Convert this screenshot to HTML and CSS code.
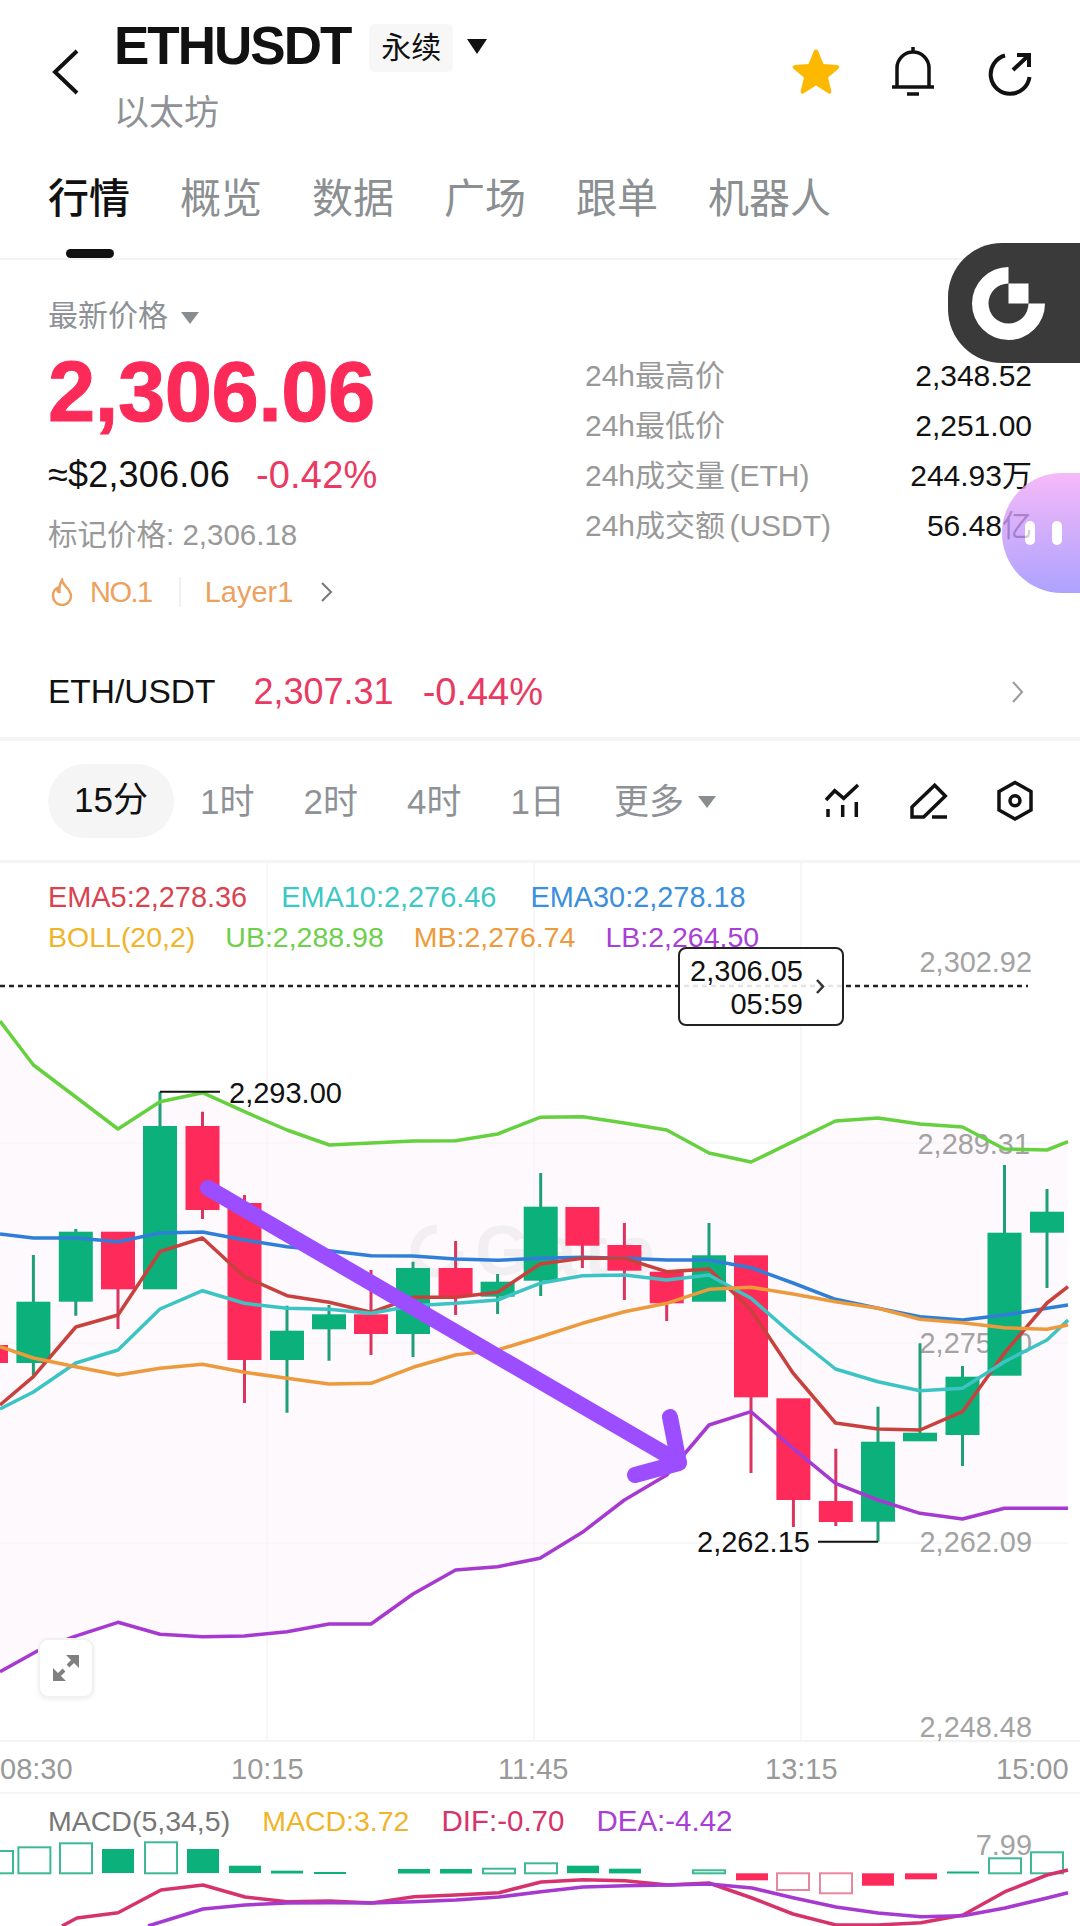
FILE: index.html
```html
<!DOCTYPE html>
<html lang="zh-CN">
<head>
  <meta charset="UTF-8">
  <meta name="viewport" content="width=device-width, initial-scale=1.0">
  <title>ETHUSDT 永续</title>
  <link rel="stylesheet" href="styles.css">
</head>
<body>
  <div id="page">
    <!-- Top bar -->
    <header class="topbar">
      <svg class="back-icon" viewBox="0 0 27 46"><path d="M25 2 3 23l22 21"/></svg>
      <div class="symbol">
        <div class="symbol-row">
          <h1 class="symbol-name">ETHUSDT</h1>
          <span class="symbol-chip">永续</span>
          <span class="caret caret-black"></span>
        </div>
        <div class="symbol-sub">以太坊</div>
      </div>
      <div class="top-actions">
        <svg class="star-icon" viewBox="0 0 50 48"><path d="M25 1.500c1.300 0 2 .8 2.500 2.200l5 12.300 13.300 1c2.700.2 3.300 2.300 1.400 4l-10.200 8.600 3.200 13c.7 2.700-1 4-3.300 2.500L25 37.500l-11.900 7.600c-2.300 1.500-4 .2-3.300-2.500l3.200-13L2.800 21c-1.900-1.700-1.300-3.800 1.400-4l13.300-1 5-12.300c.5-1.400 1.200-2.200 2.500-2.200z"/></svg>
        <svg class="bell-icon" viewBox="0 0 42 50"><path d="M21 0v5M5 40V21a16 16 0 0 1 32 0v19M0 40h42M15 47h12"/></svg>
        <svg class="share-icon" viewBox="0 0 46 46"><path d="M18 3.500A19.500 19.500 0 1 0 42.500 25M26 18 42 3M30 3h12v12"/></svg>
      </div>
    </header>

    <!-- Section tabs -->
    <nav class="tabs">
      <div class="tab-row">
        <span class="tab tab-active">行情</span>
        <span class="tab">概览</span>
        <span class="tab">数据</span>
        <span class="tab">广场</span>
        <span class="tab">跟单</span>
        <span class="tab">机器人</span>
      </div>
      <div class="tab-mark"></div>
    </nav>

    <!-- Price summary -->
    <section class="summary">
      <div class="summary-left">
        <div class="price-title">最新价格<span class="caret caret-grey"></span></div>
        <div class="price-main">2,306.06</div>
        <div class="price-sub"><span>≈$2,306.06</span><span class="price-change">-0.42%</span></div>
        <div class="price-mark">标记价格: 2,306.18</div>
        <div class="tags">
          <svg class="flame-icon" viewBox="0 0 22 28"><path d="M11 2c1 6 9 9 9 16a9 9 0 0 1-18 0c0-4 2-7 4-8 0 2 1 4 2.500 4C8 9 9 5 11 2z"/></svg>
          <span class="tag-rank">NO.1</span>
          <span class="tag-split"></span>
          <span>Layer1</span>
          <svg class="tag-arrow" viewBox="0 0 13 20"><path d="m2 1 9 9-9 9"/></svg>
        </div>
      </div>
      <div class="stats">
        <div class="stat"><span class="stat-label">24h最高价</span><span>2,348.52</span></div>
        <div class="stat"><span class="stat-label">24h最低价</span><span>2,251.00</span></div>
        <div class="stat"><span class="stat-label">24h成交量 (ETH)</span><span>244.93万</span></div>
        <div class="stat"><span class="stat-label">24h成交额 (USDT)</span><span>56.48亿</span></div>
      </div>
    </section>

    <section class="spot-row">
      <span class="spot-name">ETH/USDT</span>
      <span class="spot-price">2,307.31</span>
      <span class="spot-change">-0.44%</span>
      <svg class="spot-arrow" viewBox="0 0 13 22"><path d="m2 1 9 10-9 10"/></svg>
    </section>

    <!-- Interval switcher -->
    <section class="intervals">
      <span class="interval interval-active">15分</span>
      <span class="interval">1时</span>
      <span class="interval">2时</span>
      <span class="interval">4时</span>
      <span class="interval">1日</span>
      <span class="interval">更多<span class="caret caret-grey caret-more"></span></span>
      <div class="chart-tools">
        <svg class="tool-icon" viewBox="0 0 40 38"><path d="M4 18 12.700 8.700l9 7.600L36 3M6 27v8M20.700 23v12M34.300 20v15"/></svg>
        <svg class="tool-icon" viewBox="0 0 42 38"><path d="M4 35V25L26.700 3.300 37.300 14 15.700 35zM24 35h15"/></svg>
        <svg class="tool-icon" viewBox="0 0 38 44"><path d="m19 3.500 16 9V31l-16 9-16-9V12.500z"/><circle cx="19" cy="21.700" r="5"/></svg>
      </div>
    </section>

    <!-- Candles, indicators and price axis -->
    <section class="chart">
      <svg class="chart-canvas" viewBox="0 863 1080 879">
        <polygon class="boll-band" points="0,1021 33.400,1065 75.800,1097 118,1129 160,1101.700 202.500,1092.700 244.500,1111.700 287,1130 329.500,1145 371,1143 413,1141 455.600,1140.700 497.600,1134 540,1117.300 583,1116.700 624.400,1123 666.700,1130 709,1153 751,1162 793,1141.700 835.500,1121 878,1118 920,1124 962.500,1127 1004.500,1149 1047,1150 1068,1141.700 1068,1508.300 1047,1508.300 1004.500,1508.300 962.500,1519 920,1513.300 878,1500 835.500,1483.300 793,1448.300 751,1411.700 709,1425 666.700,1475 624.400,1500 582.400,1532.300 540,1558.300 497.600,1566.700 455.600,1570 413,1594 371,1624 329,1624 287,1631.700 244.500,1636 202.500,1636.700 160,1634.300 118,1622.300 74,1636.700 36,1651.700 0,1671.700"/>
        <path class="grid" d="M267 863v879M534 863v879M801 863v879M0 1143h1068M0 1343h1068M0 1543h1068"/>

        <!-- watermark -->
        <g class="watermark">
          <path class="watermark-ring" d="M437 1229a22 22 0 1 0 22 22"/>
          <text x="475" y="1275">Gate</text>
        </g>

        <g class="axis-labels">
          <text x="1032" y="972">2,302.92</text>
          <text x="1030" y="1154">2,289.31</text>
          <text x="1032" y="1353">2,275.70</text>
          <text x="1032" y="1552">2,262.09</text>
          <text x="1032" y="1737">2,248.48</text>
        </g>

        <!-- falling candles -->
        <path class="wick-down" d="M202.500 1111.700v107.300M244.500 1195v208M118 1289v40M371 1270v85M455.600 1241v74M582.400 1245v23M624.400 1223v77M666.700 1303v18M751 1397v76M793.400 1498v29M835.800 1448.700v77.300"/>
        <g class="candle-down">
          <rect x="-26" y="1345" width="34" height="18"/>
          <rect x="101" y="1231.700" width="34" height="57.600"/>
          <rect x="185.500" y="1126" width="34" height="84"/>
          <rect x="227.500" y="1203" width="34" height="157"/>
          <rect x="354" y="1314.300" width="34" height="19.700"/>
          <rect x="438.600" y="1268" width="34" height="28.700"/>
          <rect x="565.400" y="1207" width="34" height="38.700"/>
          <rect x="607.400" y="1245" width="34" height="25.700"/>
          <rect x="649.700" y="1271.700" width="34" height="31.600"/>
          <rect x="734" y="1255.300" width="34" height="142"/>
          <rect x="776.400" y="1398.300" width="34" height="101.700"/>
          <rect x="818.800" y="1501" width="34" height="21"/>
        </g>

        <!-- rising candles -->
        <path class="wick-up" d="M33.400 1255v120M75.800 1229v86.700M160 1091.700v40M287 1305.700v107M329 1305v55.700M413 1261.700v95.300M497.600 1274v40M540.700 1173v123M709 1223v40M878 1406.700v135M920 1343.300v92M962.500 1366v100M1004.500 1165v70M1047 1189v99"/>
        <g class="candle-up">
          <rect x="16.400" y="1301.700" width="34" height="61.300"/>
          <rect x="58.800" y="1231.700" width="34" height="70"/>
          <rect x="143" y="1126" width="34" height="163.300"/>
          <rect x="270" y="1330.700" width="34" height="29.300"/>
          <rect x="312" y="1314.300" width="34" height="15"/>
          <rect x="396" y="1268" width="34" height="66"/>
          <rect x="480.600" y="1281.700" width="34" height="15"/>
          <rect x="523.700" y="1206.700" width="34" height="74"/>
          <rect x="692" y="1255.300" width="34" height="46.400"/>
          <rect x="861" y="1441.700" width="34" height="80"/>
          <rect x="903" y="1432.700" width="34" height="8.600"/>
          <rect x="945.500" y="1376.700" width="34" height="58.300"/>
          <rect x="987.500" y="1232.700" width="34" height="143"/>
          <rect x="1030" y="1211.700" width="34" height="21"/>
        </g>

        <!-- moving averages and bollinger lines -->
        <polyline class="line line-ema30" points="0,1234 33.400,1238 75.800,1238 118,1241.700 160,1233 202.500,1232 244.500,1240 287,1246.700 329,1250.700 371,1255.700 413,1256 455.600,1259 497.600,1260.300 540,1258.300 582.400,1257.300 624.400,1258.300 666.700,1260 709,1260 751,1267.700 793,1283 835.500,1299.300 878,1308.300 920,1316.700 962.500,1320 1004.500,1315 1047,1308.300 1068,1305"/>
        <polyline class="line line-ema5" points="0,1405 33.400,1376.700 75.800,1327 118,1315 160,1251.700 202.500,1238 244.500,1276.700 287,1295.700 329,1302.300 371,1312.300 413,1297.300 455.600,1297.300 497.600,1292.300 540,1264 582.400,1258.300 624.400,1258.300 666.700,1271.700 709,1269 751,1310 793,1373 835.500,1423 878,1429 920,1430 962.500,1411.700 1004.500,1353 1047,1303 1068,1286.700"/>
        <polyline class="line line-ema10" points="0,1409 33.400,1392 75.800,1363 118,1350 160,1309 202.500,1290.700 244.500,1303.300 287,1308.300 329,1309.300 371,1313.300 413,1305.700 455.600,1303.300 497.600,1300 540,1283.300 582.400,1275.700 624.400,1275 666.700,1280 709,1275 751,1298.300 793,1335 835.500,1369 878,1381.700 920,1390.700 962.500,1388.300 1004.500,1361.700 1047,1340 1068,1320"/>
        <polyline class="line line-mb" points="0,1346.700 33.400,1358 75.800,1366.700 118,1375 160,1368.300 202.500,1364.300 244.500,1372.300 287,1378.300 329,1384 371,1383.300 413,1367.300 455.600,1355 497.600,1350 540,1337 582.400,1323.300 624.400,1311.700 666.700,1303.300 709,1289.300 751,1287.300 793,1294 835.500,1301.700 878,1308.300 920,1319.300 962.500,1322.700 1004.500,1327.700 1047,1329.300 1068,1325"/>
        <polyline class="line line-ub" points="0,1021 33.400,1065 75.800,1097 118,1129 160,1101.700 202.500,1092.700 244.500,1111.700 287,1130 329.500,1145 371,1143 413,1141 455.600,1140.700 497.600,1134 540,1117.300 583,1116.700 624.400,1123 666.700,1130 709,1153 751,1162 793,1141.700 835.500,1121 878,1118 920,1124 962.500,1127 1004.500,1149 1047,1150 1068,1141.700"/>
        <polyline class="line line-lb" points="0,1671.700 36,1651.700 74,1636.700 118,1622.300 160,1634.300 202.500,1636.700 244.500,1636 287,1631.700 329,1624 371,1624 413,1594 455.600,1570 497.600,1566.700 540,1558.300 582.400,1532.300 624.400,1500 666.700,1475 709,1425 751,1411.700 793,1448.300 835.500,1483.300 878,1500 920,1513.300 962.500,1519 1004.500,1508.300 1047,1508.300 1068,1508.300"/>

        <!-- last price marker -->
        <path class="last-line" d="M0 986h1028"/>
        <rect class="last-box" x="679" y="948" width="164" height="77" rx="7"/>
        <g class="last-text">
          <text x="803" y="981">2,306.05</text>
          <text x="803" y="1014">05:59</text>
        </g>
        <path class="last-arrow" d="m817 980 6 6.500-6 6.500"/>

        <!-- session high and low -->
        <path class="extreme-line" d="M160 1091.700h60M818 1541.700h60"/>
        <text class="extreme" x="229" y="1103">2,293.00</text>
        <text class="extreme" x="697" y="1552">2,262.15</text>

        <!-- hand drawn arrow -->
        <path class="scribble" d="M208 1188 679 1462M670 1417l9 46-44 12"/>
      </svg>

      <div class="legend">
        <div class="legend-row legend-ema">
          <span class="c-ema5">EMA5:2,278.36</span>
          <span class="c-ema10">EMA10:2,276.46</span>
          <span class="c-ema30">EMA30:2,278.18</span>
        </div>
        <div class="legend-row">
          <span class="c-boll">BOLL(20,2)</span>
          <span class="c-ub">UB:2,288.98</span>
          <span class="c-mb">MB:2,276.74</span>
          <span class="c-lb">LB:2,264.50</span>
        </div>
      </div>

      <button class="expand-btn">
        <svg viewBox="0 0 28 28"><path class="expand-stroke" d="m4 24 8-8M24 4l-8 8"/><path class="expand-fill" d="M1 14v13h13zM27 14V1H14z"/></svg>
      </button>
    </section>

    <!-- Time axis -->
    <div class="time-axis">
      <span>08:30</span>
      <span>10:15</span>
      <span>11:45</span>
      <span>13:15</span>
      <span>15:00</span>
    </div>

    <!-- MACD panel -->
    <section class="macd">
      <svg class="macd-canvas" viewBox="0 1794 1080 132">
        <text class="macd-axis" x="1032" y="1855">7.99</text>
        <g class="macd-solid-up">
          <rect x="102" y="1849" width="32" height="24"/>
          <rect x="187" y="1849" width="32" height="24"/>
          <rect x="229" y="1865.700" width="32" height="7.300"/>
          <rect x="271" y="1870.700" width="32" height="2.800"/>
          <rect x="314" y="1872" width="32" height="2"/>
          <rect x="398" y="1869" width="32" height="4.500"/>
          <rect x="440" y="1869" width="32" height="4.500"/>
          <rect x="567" y="1865.700" width="32" height="7.500"/>
          <rect x="609" y="1868.700" width="32" height="4.700"/>
          <rect x="947" y="1871.500" width="32" height="2"/>
        </g>
        <g class="macd-hollow-up">
          <rect x="-19" y="1851" width="32" height="22.300"/>
          <rect x="18.400" y="1847.300" width="32" height="26"/>
          <rect x="60" y="1843.300" width="32" height="30"/>
          <rect x="145" y="1842.300" width="32" height="31"/>
          <rect x="483" y="1868.700" width="32" height="4.700"/>
          <rect x="525" y="1863.300" width="32" height="10"/>
          <rect x="693" y="1870.300" width="32" height="3"/>
          <rect x="989" y="1858.300" width="32" height="15"/>
          <rect x="1031" y="1852.300" width="32" height="21"/>
        </g>
        <g class="macd-solid-down">
          <rect x="736" y="1873.300" width="32" height="7"/>
          <rect x="862" y="1873.300" width="32" height="12.400"/>
          <rect x="905" y="1873.300" width="32" height="6"/>
        </g>
        <g class="macd-hollow-down">
          <rect x="777" y="1873.300" width="32" height="16.700"/>
          <rect x="820" y="1873.300" width="32" height="20"/>
        </g>
        <polyline class="line line-dif" points="62,1926 77,1918 118,1912.700 161,1890 203,1885 245,1897 287,1901.700 330,1901 372,1903 414,1896.700 456,1895 499,1892.700 541,1882 583,1879.700 625,1880.700 668,1885 709,1883 752,1898 793,1914 836,1925 878,1925 921,1922.700 963,1915 1005,1891.700 1047,1875 1068,1870"/>
        <polyline class="line line-dea" points="148,1926 203,1909 245,1905 287,1903 330,1902.700 372,1903 414,1901.700 456,1900 499,1897 541,1891.700 583,1887 625,1885.700 668,1885 709,1884 752,1888 793,1897.700 836,1907 878,1913 921,1916.700 963,1915.700 1005,1908 1047,1898 1068,1892.700"/>
      </svg>
      <div class="macd-legend">
        <span class="c-macd-name">MACD(5,34,5)</span>
        <span class="c-boll">MACD:3.72</span>
        <span class="c-dif macd-value">DIF:-0.70</span>
        <span class="c-lb macd-value">DEA:-4.42</span>
      </div>
    </section>

    <!-- Floating widgets -->
    <div class="float-logo">
      <svg viewBox="972 267 73 73">
        <path d="M1008.500 267a36.500 36.500 0 1 0 36.500 36.500h-16.500a20 20 0 1 1-20-20z"/>
        <rect x="1008.500" y="283.500" width="20" height="20"/>
      </svg>
    </div>
    <div class="float-bubble">
      <span class="bubble-dot"></span>
      <span class="bubble-dot"></span>
    </div>
  </div>
</body>
</html>
```

FILE: styles.css
```css
* {
  box-sizing: border-box;
}

body {
  margin: 0;
  padding: 0;
  font-family: "Liberation Sans", "Noto Sans CJK SC", sans-serif;
  background-color: #fff;
  color: #111;
  overflow: hidden;
}

#page {
  position: relative;
  width: 1080px;
  height: 1926px;
  overflow: hidden;
}

svg {
  display: block;
}

/* Top bar */
.topbar {
  display: flex;
  height: 140px;
}

.back-icon {
  width: 27px;
  height: 46px;
  margin: 49px 35px 0 52px;
  flex: none;
  fill: none;
  stroke: #111;
  stroke-width: 4;
}

.symbol {
  padding-top: 17px;
}

.symbol-row {
  display: flex;
  align-items: center;
  height: 58px;
}

.symbol-name {
  margin: 0;
  font-size: 53px;
  line-height: 58px;
  font-weight: 700;
  letter-spacing: -2px;
}

.symbol-chip {
  width: 84px;
  height: 48px;
  margin: 4px 0 0 19px;
  background-color: #f7f7f7;
  border-radius: 6px;
  font-size: 30px;
  line-height: 48px;
  text-align: center;
}

.caret {
  display: inline-block;
  width: 0;
  height: 0;
  border-style: solid;
  border-color: transparent;
}

.caret-black {
  margin: 0 0 0 14px;
  border-width: 15px 10px 0;
  border-top-color: #111;
}

.caret-grey {
  margin-left: 13px;
  border-width: 12px 9px 0;
  border-top-color: #8a8d90;
  vertical-align: middle;
}

.symbol-sub {
  margin-top: 18px;
  font-size: 35px;
  line-height: 40px;
  color: #8e9296;
}

.top-actions {
  display: flex;
  margin-left: auto;
  padding: 47px 49px 0 0;
}

.star-icon {
  width: 50px;
  height: 48px;
  margin: 1px 51px 0 0;
  fill: #fdb900;
}

.bell-icon {
  width: 42px;
  height: 50px;
  margin-right: 53px;
  fill: none;
  stroke: #111;
  stroke-width: 3.5;
}

.share-icon {
  width: 46px;
  height: 46px;
  margin: 5px -2px 0 0;
  fill: none;
  stroke: #111;
  stroke-width: 4;
}

/* Section tabs */
.tabs {
  height: 120px;
  padding-top: 35px;
  border-bottom: 2px solid #f3f3f3;
}

.tab-row {
  display: flex;
  gap: 50px;
  height: 48px;
  padding-left: 48px;
}

.tab {
  font-size: 41px;
  line-height: 48px;
  color: #8b8f92;
}

.tab-active {
  color: #111;
  font-weight: 500;
}

.tab-mark {
  width: 48px;
  height: 9px;
  margin: 26px 0 0 66px;
  background-color: #111;
  border-radius: 5px;
}

/* Price summary */
.summary {
  display: flex;
  padding: 36px 48px 0 48px;
}

.price-title {
  height: 40px;
  font-size: 30px;
  line-height: 40px;
  color: #8e9296;
}

.price-main {
  margin-top: 14px;
  font-size: 85px;
  line-height: 84px;
  font-weight: 700;
  letter-spacing: -0.5px;
  color: #fb2a58;
  -webkit-text-stroke: 1px #fb2a58;
}

.price-sub {
  display: flex;
  gap: 26px;
  margin-top: 19px;
  font-size: 36px;
  line-height: 44px;
  letter-spacing: 0.2px;
}

.price-change {
  font-size: 38px;
  color: #e83a62;
}

.price-mark {
  margin-top: 18px;
  font-size: 29.5px;
  line-height: 40px;
  color: #999;
}

.tags {
  display: flex;
  align-items: center;
  height: 40px;
  margin-top: 17px;
  font-size: 29px;
  color: #eda15f;
}

.flame-icon {
  width: 22px;
  height: 28px;
  margin: 0 17px 0 3px;
  fill: none;
  stroke: #eda15f;
  stroke-width: 2.500;
}

.tag-rank {
  letter-spacing: -1.5px;
}

.tag-split {
  width: 2px;
  height: 30px;
  margin: 0 24px 0 27px;
  background-color: #f4f1ee;
}

.tag-arrow {
  width: 13px;
  height: 20px;
  margin-left: 27px;
  fill: none;
  stroke: #777;
  stroke-width: 2;
}

.stats {
  width: 447px;
  margin: 55px 0 0 auto;
}

.stat {
  display: flex;
  justify-content: space-between;
  font-size: 30px;
  line-height: 50px;
}

.stat-label {
  color: #999;
  word-spacing: -4px;
}

.spot-row {
  display: flex;
  align-items: center;
  height: 85px;
  margin-top: 44px;
  padding: 0 56px 9px 48px;
  border-bottom: 4px solid #f5f5f5;
}

.spot-name {
  font-size: 33.5px;
  margin-right: 38px;
}

.spot-price {
  font-size: 36px;
  color: #e83a62;
}

.spot-change {
  margin-left: 29px;
  font-size: 38px;
  color: #e83a62;
}

.spot-arrow {
  width: 13px;
  height: 22px;
  margin-left: auto;
  fill: none;
  stroke: #999;
  stroke-width: 2;
}

/* Interval switcher */
.intervals {
  display: flex;
  align-items: center;
  gap: 49px;
  height: 122px;
  padding: 0 46px 0 48px;
  border-bottom: 3px solid #f5f5f5;
}

.interval {
  margin-bottom: 4px;
  font-size: 35px;
  color: #8e9296;
  white-space: nowrap;
}

.interval-active {
  width: 126px;
  height: 74px;
  margin: 0 -23px 0 0;
  background-color: #f5f5f5;
  border-radius: 37px;
  line-height: 72px;
  text-align: center;
  color: #111;
}

.caret-more {
  margin: 0 0 5px 14px;
}

.chart-tools {
  display: flex;
  align-items: center;
  gap: 46px;
  margin-left: auto;
}

.tool-icon {
  height: 38px;
  width: auto;
  fill: none;
  stroke: #111;
  stroke-width: 3.5;
}

.tool-icon:nth-child(1) {
  width: 40px;
}

.tool-icon:nth-child(2) {
  width: 42px;
}

.tool-icon:nth-child(3) {
  width: 38px;
  height: 44px;
}

/* Main chart */
.chart {
  position: relative;
  height: 879px;
  border-bottom: 2px solid #f4f4f4;
}

.chart-canvas {
  position: absolute;
  top: 0;
  left: 0;
  width: 1080px;
  height: 879px;
}

.legend {
  position: relative;
  padding: 14px 0 0 48px;
  font-size: 28.5px;
  line-height: 40px;
}

.legend-row {
  display: flex;
  gap: 30px;
}

.legend-ema {
  gap: 34px;
  font-size: 28.9px;
}

.c-ema5 { color: #d9434f; }
.c-ema10 { color: #3cc8c4; }
.c-ema30 { color: #3a8fe0; }
.c-boll { color: #f0b429; }
.c-ub { color: #6cd04a; }
.c-mb { color: #ee9a3c; }
.c-lb { color: #a83fd6; }
.c-dif { color: #d6336c; }
.c-macd-name { color: #777; }

.boll-band {
  fill: #fdf9fd;
}

.grid {
  fill: none;
  stroke: #f8f4f8;
  stroke-width: 1.5;
}

.watermark {
  font-size: 70px;
  font-weight: 700;
  fill: #f2eff2;
  letter-spacing: 8px;
}

.watermark-ring {
  fill: none;
  stroke: #f2eff2;
  stroke-width: 9;
}

.axis-labels text {
  font-size: 28.9px;
  fill: #a3a3a3;
  text-anchor: end;
}

.wick-up,
.wick-down {
  fill: none;
  stroke-width: 3;
}

.wick-up {
  stroke: #1f9f78;
}

.wick-down {
  stroke: #d9355f;
}

.candle-up {
  fill: #0bb07b;
}

.candle-down {
  fill: #fe2a5a;
}

.line {
  fill: none;
  stroke-width: 3.5;
  stroke-linejoin: round;
}

.line-ema5 { stroke: #c8413c; }
.line-ema10 { stroke: #3cc4c4; }
.line-ema30 { stroke: #2f7fd8; }
.line-mb { stroke: #ec9a3c; }
.line-ub { stroke: #66d13f; }
.line-lb { stroke: #a63ad0; }
.line-dif { stroke: #d6336c; }
.line-dea { stroke: #a63ad0; }

.last-line {
  fill: none;
  stroke: #222;
  stroke-width: 2.5;
  stroke-dasharray: 5 4;
}

.last-box {
  fill: #fff;
  fill-opacity: 0.88;
  stroke: #222;
  stroke-width: 2;
}

.last-text text {
  font-size: 29px;
  fill: #111;
  text-anchor: end;
}

.last-arrow {
  fill: none;
  stroke: #333;
  stroke-width: 2.5;
}

.extreme-line {
  fill: none;
  stroke: #111;
  stroke-width: 2;
}

.extreme {
  font-size: 29px;
  fill: #111;
}

.scribble {
  fill: none;
  stroke: #9b4dff;
  stroke-width: 16;
  stroke-linecap: round;
  stroke-linejoin: round;
}

.expand-btn {
  position: absolute;
  left: 38px;
  top: 775px;
  width: 56px;
  height: 60px;
  padding: 0;
  display: flex;
  align-items: center;
  justify-content: center;
  background-color: #fff;
  border: 2px solid #f1f1f1;
  border-radius: 10px;
  box-shadow: 0 2px 4px rgba(0, 0, 0, 0.06);
}

.expand-btn svg {
  width: 28px;
  height: 28px;
}

.expand-stroke {
  fill: none;
  stroke: #808080;
  stroke-width: 4;
}

.expand-fill {
  fill: #808080;
}

/* Time axis */
.time-axis {
  display: grid;
  grid-template-columns: 231px 267px 267px 231px 72px;
  height: 52px;
  padding-top: 2px;
  border-bottom: 2px solid #f6f6f6;
  font-size: 29px;
  line-height: 50px;
  color: #999;
}

/* MACD panel */
.macd {
  position: relative;
  height: 132px;
}

.macd-canvas {
  position: absolute;
  top: 0;
  left: 0;
  width: 1080px;
  height: 132px;
}

.macd-legend {
  position: relative;
  display: flex;
  gap: 32px;
  padding: 7px 0 0 48px;
  font-size: 28.5px;
  line-height: 40px;
}

.macd-value {
  font-size: 29.5px;
}

.macd-axis {
  font-size: 28.9px;
  fill: #a3a3a3;
  text-anchor: end;
}

.macd-solid-up {
  fill: #0bb07b;
}

.macd-hollow-up {
  fill: #fff;
  stroke: #3fb896;
  stroke-width: 2;
}

.macd-solid-down {
  fill: #fe2a5a;
}

.macd-hollow-down {
  fill: #fff;
  stroke: #e9859d;
  stroke-width: 2;
}

/* Floating widgets */
.float-logo {
  position: absolute;
  left: 948px;
  top: 243px;
  width: 132px;
  height: 120px;
  display: flex;
  align-items: center;
  padding-left: 24px;
  background-color: #3a3a3a;
  border-radius: 54px 0 0 54px;
}

.float-logo svg {
  width: 73px;
  height: 73px;
  fill: #fff;
}

.float-bubble {
  position: absolute;
  left: 1002px;
  top: 473px;
  width: 78px;
  height: 120px;
  display: flex;
  align-items: center;
  gap: 17px;
  padding: 0 0 0 23px;
  background: linear-gradient(180deg, #f3a8f7 0%, #9a8cff 100%);
  border-radius: 60px 0 0 60px;
  opacity: 0.8;
}

.bubble-dot {
  width: 10px;
  height: 24px;
  background-color: #fff;
  border-radius: 5px;
}
```
